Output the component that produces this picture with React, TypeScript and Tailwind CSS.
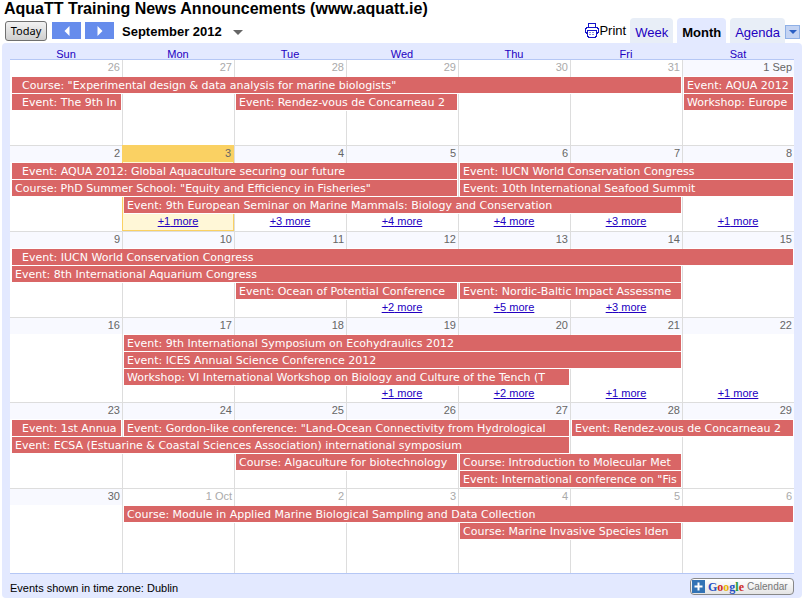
import { useState } from 'react'

// ── Data ──────────────────────────────────────────────────────────────────────

type CalEvent = { title: string; start: number; span: number; row: number; continued?: boolean }
type Day = { label: string; other?: boolean; today?: boolean; more?: number }
type Week = { height: string; days: Day[]; events: CalEvent[] }

const DAY_NAMES = ['Sun', 'Mon', 'Tue', 'Wed', 'Thu', 'Fri', 'Sat']

const WEEKS: Week[] = [
  {
    height: 'min-h-[86px]',
    days: [
      { label: '26', other: true },
      { label: '27', other: true },
      { label: '28', other: true },
      { label: '29', other: true },
      { label: '30', other: true },
      { label: '31', other: true },
      { label: '1 Sep' },
    ],
    events: [
      { title: 'Course: "Experimental design & data analysis for marine biologists"', start: 0, span: 6, row: 0, continued: true },
      { title: 'Event: AQUA 2012', start: 6, span: 1, row: 0 },
      { title: 'Event: The 9th In', start: 0, span: 1, row: 1, continued: true },
      { title: 'Event: Rendez-vous de Concarneau 2', start: 2, span: 2, row: 1 },
      { title: 'Workshop: Europe', start: 6, span: 1, row: 1 },
    ],
  },
  {
    height: 'min-h-[86px]',
    days: [
      { label: '2' },
      { label: '3', today: true, more: 1 },
      { label: '4', more: 3 },
      { label: '5', more: 4 },
      { label: '6', more: 4 },
      { label: '7', more: 3 },
      { label: '8', more: 1 },
    ],
    events: [
      { title: 'Event: AQUA 2012: Global Aquaculture securing our future', start: 0, span: 4, row: 0, continued: true },
      { title: 'Event: IUCN World Conservation Congress', start: 4, span: 3, row: 0 },
      { title: 'Course: PhD Summer School: "Equity and Efficiency in Fisheries"', start: 0, span: 4, row: 1 },
      { title: 'Event: 10th International Seafood Summit', start: 4, span: 3, row: 1 },
      { title: 'Event: 9th European Seminar on Marine Mammals: Biology and Conservation', start: 1, span: 5, row: 2 },
    ],
  },
  {
    height: 'min-h-[86px]',
    days: [
      { label: '9' },
      { label: '10' },
      { label: '11' },
      { label: '12', more: 2 },
      { label: '13', more: 5 },
      { label: '14', more: 3 },
      { label: '15' },
    ],
    events: [
      { title: 'Event: IUCN World Conservation Congress', start: 0, span: 7, row: 0, continued: true },
      { title: 'Event: 8th International Aquarium Congress', start: 0, span: 6, row: 1 },
      { title: 'Event: Ocean of Potential Conference', start: 2, span: 2, row: 2 },
      { title: 'Event: Nordic-Baltic Impact Assessme', start: 4, span: 2, row: 2 },
    ],
  },
  {
    height: 'min-h-[85px]',
    days: [
      { label: '16' },
      { label: '17' },
      { label: '18' },
      { label: '19', more: 1 },
      { label: '20', more: 2 },
      { label: '21', more: 1 },
      { label: '22', more: 1 },
    ],
    events: [
      { title: 'Event: 9th International Symposium on Ecohydraulics 2012', start: 1, span: 5, row: 0 },
      { title: 'Event: ICES Annual Science Conference 2012', start: 1, span: 5, row: 1 },
      { title: 'Workshop: VI International Workshop on Biology and Culture of the Tench (T', start: 1, span: 4, row: 2 },
    ],
  },
  {
    height: 'min-h-[86px]',
    days: [
      { label: '23' },
      { label: '24' },
      { label: '25' },
      { label: '26' },
      { label: '27' },
      { label: '28' },
      { label: '29' },
    ],
    events: [
      { title: 'Event: 1st Annua', start: 0, span: 1, row: 0, continued: true },
      { title: 'Event: Gordon-like conference: "Land-Ocean Connectivity from Hydrological', start: 1, span: 4, row: 0 },
      { title: 'Event: Rendez-vous de Concarneau 2', start: 5, span: 2, row: 0 },
      { title: 'Event: ECSA (Estuarine & Coastal Sciences Association) international symposium', start: 0, span: 5, row: 1 },
      { title: 'Course: Algaculture for biotechnology', start: 2, span: 2, row: 2 },
      { title: 'Course: Introduction to Molecular Met', start: 4, span: 2, row: 2 },
      { title: 'Event: International conference on "Fis', start: 4, span: 2, row: 3 },
    ],
  },
  {
    height: 'min-h-[85px]',
    days: [
      { label: '30' },
      { label: '1 Oct', other: true },
      { label: '2', other: true },
      { label: '3', other: true },
      { label: '4', other: true },
      { label: '5', other: true },
      { label: '6', other: true },
    ],
    events: [
      { title: 'Course: Module in Applied Marine Biological Sampling and Data Collection', start: 1, span: 6, row: 0 },
      { title: 'Course: Marine Invasive Species Iden', start: 4, span: 2, row: 1 },
    ],
  },
]

const COL_START = ['col-start-1', 'col-start-2', 'col-start-3', 'col-start-4', 'col-start-5', 'col-start-6', 'col-start-7']
const COL_END = ['', 'col-end-2', 'col-end-3', 'col-end-4', 'col-end-5', 'col-end-6', 'col-end-7', 'col-end-8']
const ROW_START = ['row-start-1', 'row-start-2', 'row-start-3', 'row-start-4']

// ── Icons ─────────────────────────────────────────────────────────────────────

function PrintIcon() {
  return (
    <svg width="14" height="15" viewBox="0 0 14 15" fill="none" stroke="#1414c8" shapeRendering="crispEdges">
      <path d="M3.5 5V0.5H10.5V5" fill="#fff" />
      <path d="M3 10.5H1.5V9.5H0.5V5.5H1.5V4.5H12.5V5.5H13.5V9.5H12.5V10.5H11" />
      <path d="M2.5 7.5H11.5V13.5H10.5V14.5H3.5V13.5H2.5Z" fill="#fff" />
      <path d="M4 9.5H10M4 11.5H10" strokeDasharray="2 1" stroke="#8c8ce0" />
    </svg>
  )
}

function Arrow({ direction }: { direction: 'left' | 'right' }) {
  return (
    <svg width="6" height="10" viewBox="0 0 6 10" fill="#fff">
      <path d={direction === 'left' ? 'M5.5 0V10L0.5 5Z' : 'M0.5 0V10L5.5 5Z'} />
    </svg>
  )
}

function Caret({ wide, color }: { wide?: boolean; color: string }) {
  return (
    <svg width={wide ? 10 : 8} height={wide ? 5 : 4} viewBox="0 0 10 5" fill={color}>
      <path d="M0 0H10L5 5Z" />
    </svg>
  )
}

// ── Week row ──────────────────────────────────────────────────────────────────

function DayCell({ day, first, topLine }: { day: Day; first: boolean; topLine: string }) {
  const line = first ? '' : day.today ? 'border-l border-[#fad163]' : 'border-l border-[#dddddd]'
  const band = day.today ? 'bg-[#fad163]' : day.other ? 'bg-white' : 'bg-[#f8f9ff]'
  return (
    <div className={`flex flex-col ${day.today ? 'bg-[#fff7d7]' : 'bg-white'}`}>
      <div className={`border-t ${day.today ? 'border-[#fad163]' : topLine}`} />
      <div className={`flex flex-1 flex-col ${line} ${day.today ? 'border-r border-b' : ''}`}>
        <div className={`h-4 pr-[2px] text-right leading-[15px] ${band} ${day.other ? 'text-[#aaaaaa]' : 'text-[#666666]'}`}>
          {day.label}
        </div>
      </div>
    </div>
  )
}

function WeekRow({ week, first }: { week: Week; first: boolean }) {
  return (
    <div className={`relative flow-root ${week.height}`}>
      <div className="absolute inset-0 grid grid-cols-7">
        {week.days.map((day, i) => (
          <DayCell key={i} day={day} first={i === 0} topLine={first ? 'border-[#b5c7f5]' : 'border-[#dddddd]'} />
        ))}
      </div>
      <div className="relative -mb-1 grid grid-cols-7 auto-rows-[17px] pt-[18px]">
        {week.events.map((event) => (
          <button
            key={`${event.start}-${event.row}`}
            className={`mr-px ml-[2px] overflow-hidden border-b border-white bg-[#d96666] text-left font-['DejaVu_Sans',sans-serif] leading-[18px] whitespace-nowrap text-white ${event.continued ? 'pl-[10px]' : 'pl-[3px]'} ${COL_START[event.start]} ${COL_END[event.start + event.span]} ${ROW_START[event.row]}`}
          >
            {event.title}
          </button>
        ))}
        {week.days.map((day, i) =>
          day.more ? (
            <a key={i} href="#more" className={`row-start-4 text-center leading-[14px] text-[#2200c1] underline ${COL_START[i]}`}>
              +{day.more} more
            </a>
          ) : null,
        )}
      </div>
    </div>
  )
}

// ── Toolbar ───────────────────────────────────────────────────────────────────

function Tab({ label, active, onClick }: { label: string; active: boolean; onClick: () => void }) {
  return (
    <button
      onClick={onClick}
      className={`h-[25px] rounded-t px-[5px] pt-1 ${active ? 'bg-[#e3e9ff] font-bold text-black' : 'bg-[#e8eef7] text-[#2200c1]'}`}
    >
      {label}
    </button>
  )
}

function Toolbar() {
  const [view, setView] = useState('Month')
  return (
    <div className="flex h-[25px] items-start pl-[3px] text-[13px]">
      <button className="mt-[3px] h-5 w-[42px] rounded-[3px] border border-[#707070] bg-linear-to-b from-[#f2f2f2] to-[#cfcfcf] font-['Noto_Sans',sans-serif] text-[11px] leading-4 text-black">
        Today
      </button>
      <button aria-label="Previous month" className="mt-1 ml-[5px] flex h-[17px] w-[29px] items-center justify-center bg-[#668cec]">
        <Arrow direction="left" />
      </button>
      <button aria-label="Next month" className="mt-1 ml-1 flex h-[17px] w-[29px] items-center justify-center bg-[#668cec]">
        <Arrow direction="right" />
      </button>
      <button className="mt-1 ml-2 flex h-5 items-center gap-[11px] font-bold">
        September 2012
        <Caret wide color="#666666" />
      </button>
      <div className="ml-auto flex gap-1">
        <button className="flex h-[25px] items-center">
          <PrintIcon />
          Print
        </button>
        {['Week', 'Month', 'Agenda'].map((name) => (
          <Tab key={name} label={name} active={view === name} onClick={() => setView(name)} />
        ))}
      </div>
      <button aria-label="Choose calendars" className="mt-[7px] mr-[2px] flex h-[14px] w-[15px] items-center justify-center border border-[#8fb0e6] bg-[#c3d3f3]">
        <Caret color="#2a5fc4" />
      </button>
    </div>
  )
}

function GoogleBadge() {
  return (
    <a href="#google" className="flex h-[17px] w-[104px] items-center gap-[3px] rounded border border-[#888888] bg-linear-to-b from-white to-[#e4e4e4] pl-px">
      <svg width="13" height="13" viewBox="0 0 13 13">
        <rect width="13" height="13" fill="#3373b5" />
        <path d="M6.5 2.5V10.5M2.5 6.5H10.5" stroke="#fff" strokeWidth="2" />
      </svg>
      <span className="font-['Liberation_Serif',serif] text-[12px] leading-4 font-bold">
        <span className="text-[#1f4fc4]">G</span>
        <span className="text-[#d02a24]">o</span>
        <span className="text-[#e8b100]">o</span>
        <span className="text-[#1f4fc4]">g</span>
        <span className="text-[#2a9a3a]">l</span>
        <span className="text-[#d02a24]">e</span>
      </span>
      <span className="text-[10px] text-[#777777]">Calendar</span>
    </a>
  )
}

// ── Page ──────────────────────────────────────────────────────────────────────

export default function App() {
  return (
    <div className="bg-white pr-[9px] pl-[2px] font-['Liberation_Sans',Arial,sans-serif] text-[11px] text-black">
      <h1 className="h-[18px] pl-[2px] text-[16px] leading-[18px] font-bold">AquaTT Training News Announcements (www.aquatt.ie)</h1>
      <Toolbar />
      <main className="rounded bg-[#e3e9ff] px-2">
        <div className="grid h-4 grid-cols-7 pt-[3px] text-center leading-4 text-[#2200c1]">
          {DAY_NAMES.map((name) => (
            <span key={name}>{name}</span>
          ))}
        </div>
        {WEEKS.map((week, i) => (
          <WeekRow key={i} week={week} first={i === 0} />
        ))}
        <footer className="flex h-[25px] items-start justify-between border-t border-[#b5c7f5] pt-1">
          <span className="pt-[2px] leading-4">Events shown in time zone: Dublin</span>
          <GoogleBadge />
        </footer>
      </main>
    </div>
  )
}
